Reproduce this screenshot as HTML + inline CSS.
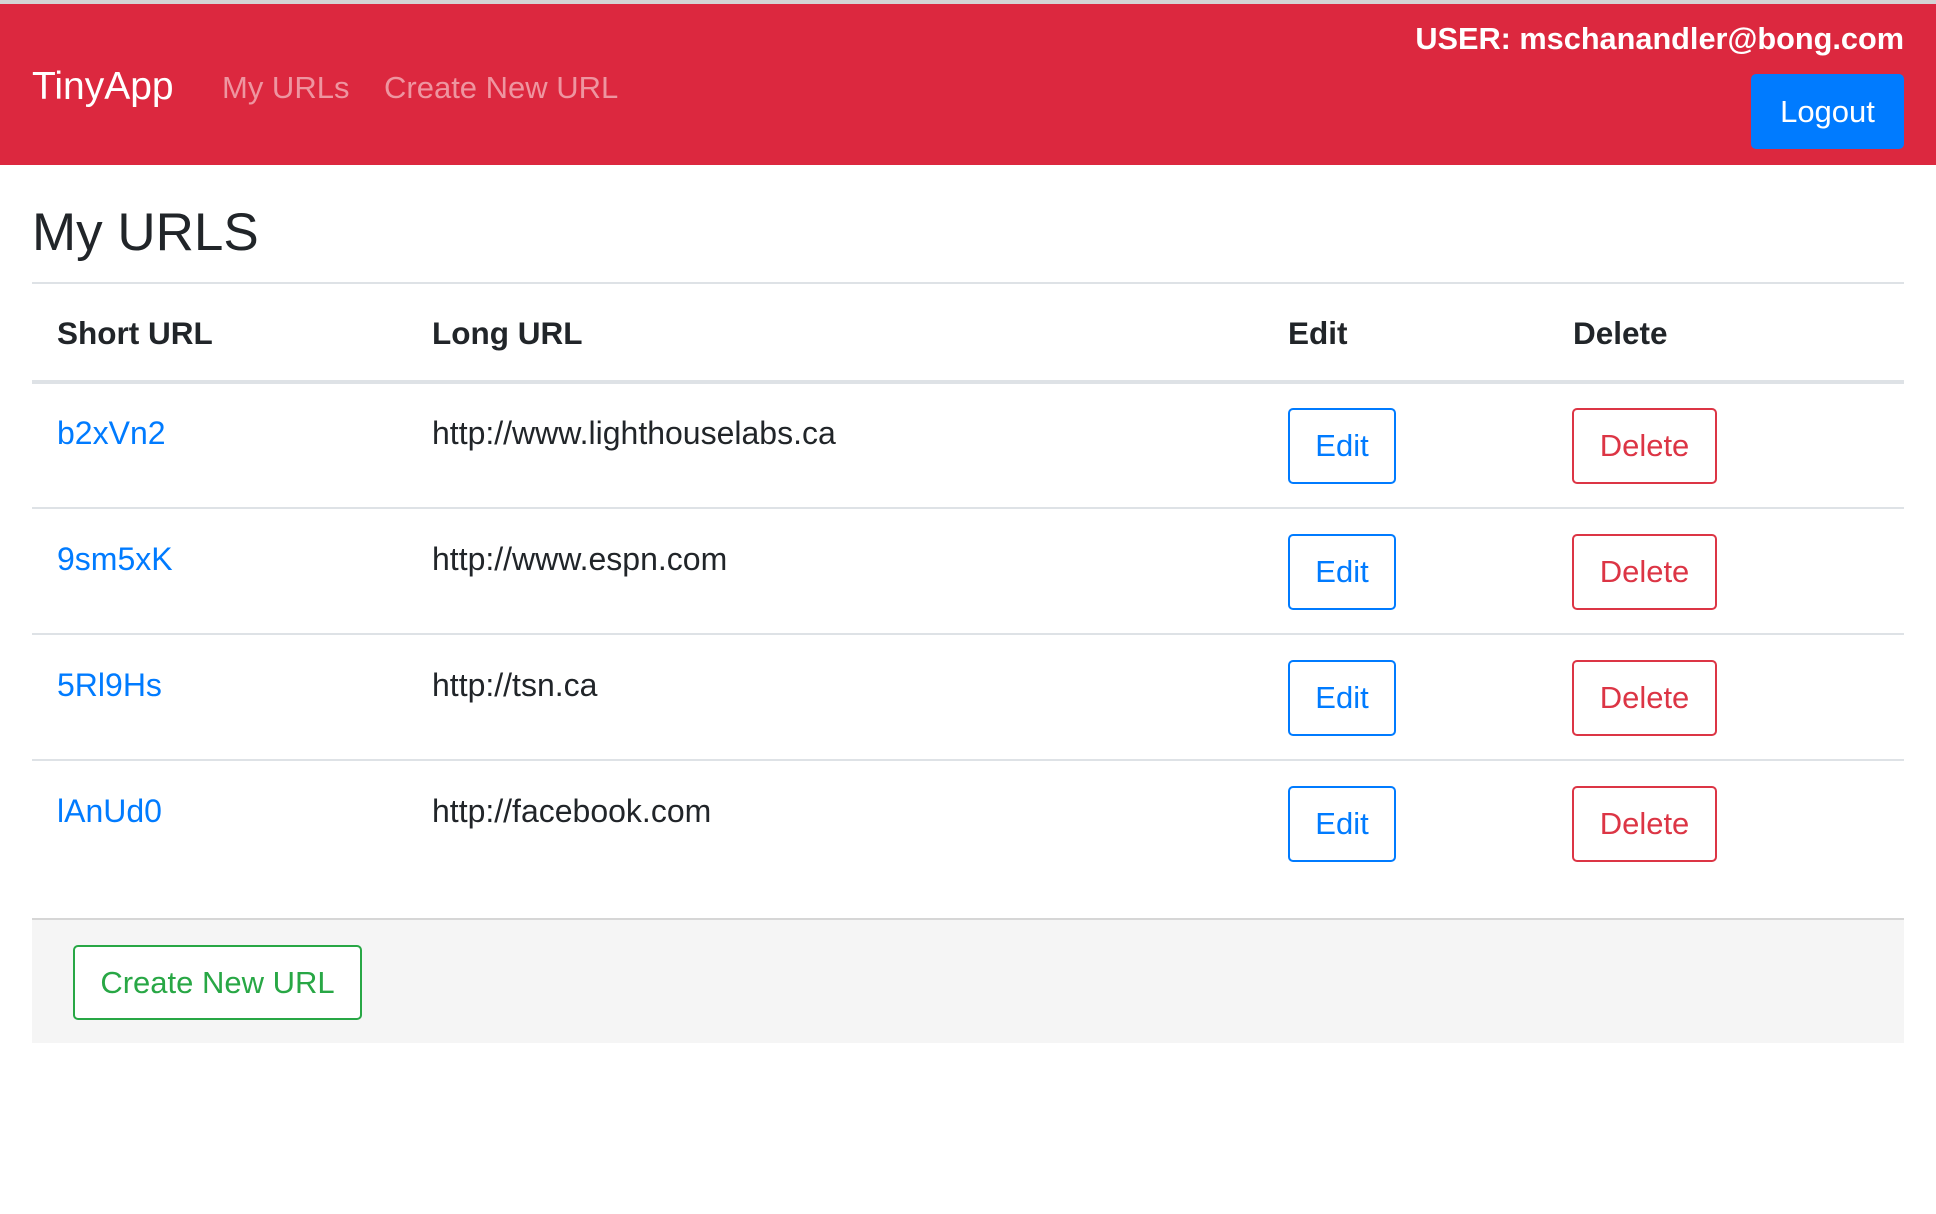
<!DOCTYPE html>
<html><head><meta charset="utf-8"><style>
*{margin:0;padding:0;box-sizing:border-box}
body{width:1936px;height:1214px;background:#fff;font-family:"Liberation Sans",Arial,sans-serif;color:#212529;position:relative;overflow:hidden}
.a{position:absolute;white-space:nowrap}
.top{left:0;top:0;width:1936px;height:4px;background:#d4d4d4}
.nav{left:0;top:4px;width:1936px;height:161px;background:#dc283f}
.btn{position:absolute;border-radius:5px;font-size:31px;display:flex;align-items:center;justify-content:center;background:#fff}
.line{position:absolute;left:32px;width:1872px;background:#dee2e6}
.cell{position:absolute;font-size:32px;line-height:36px}
.lnk{color:#007bff}
</style></head><body>
<div class="a top"></div>
<div class="a nav"></div>
<div class="a" style="left:32px;top:65px;font-size:39px;color:#fff;line-height:44px">TinyApp</div>
<div class="a" style="left:222px;top:70px;font-size:31px;color:#ee95a0;line-height:36px">My URLs</div>
<div class="a" style="left:384px;top:70px;font-size:31px;color:#ee95a0;line-height:36px">Create New URL</div>
<div class="a" style="right:32px;top:21px;font-size:30.7px;font-weight:bold;color:#fff;line-height:36px">USER: mschanandler@bong.com</div>
<div class="btn" style="left:1751px;top:74px;width:153px;height:75px;background:#007bff;color:#fff">Logout</div>
<div class="a" style="left:32px;top:201px;font-size:53px;font-weight:500;line-height:64px">My URLS</div>
<div class="line" style="top:282px;height:2px"></div>
<div class="cell" style="left:57px;top:315px;font-weight:bold;font-size:31.5px">Short URL</div>
<div class="cell" style="left:432px;top:315px;font-weight:bold;font-size:31.5px">Long URL</div>
<div class="cell" style="left:1288px;top:315px;font-weight:bold;font-size:31.5px">Edit</div>
<div class="cell" style="left:1573px;top:315px;font-weight:bold;font-size:31.5px">Delete</div>
<div class="line" style="top:380px;height:4px"></div>

<div class="cell lnk" style="left:57px;top:415px">b2xVn2</div>
<div class="cell" style="left:432px;top:415px">http://www.lighthouselabs.ca</div>
<div class="btn" style="left:1288px;top:408px;width:108px;height:76px;border:2px solid #007bff;color:#007bff">Edit</div>
<div class="btn" style="left:1572px;top:408px;width:145px;height:76px;border:2px solid #dc3545;color:#dc3545">Delete</div>
<div class="line" style="top:507px;height:2px"></div>

<div class="cell lnk" style="left:57px;top:541px">9sm5xK</div>
<div class="cell" style="left:432px;top:541px">http://www.espn.com</div>
<div class="btn" style="left:1288px;top:534px;width:108px;height:76px;border:2px solid #007bff;color:#007bff">Edit</div>
<div class="btn" style="left:1572px;top:534px;width:145px;height:76px;border:2px solid #dc3545;color:#dc3545">Delete</div>
<div class="line" style="top:633px;height:2px"></div>

<div class="cell lnk" style="left:57px;top:667px">5Rl9Hs</div>
<div class="cell" style="left:432px;top:667px">http://tsn.ca</div>
<div class="btn" style="left:1288px;top:660px;width:108px;height:76px;border:2px solid #007bff;color:#007bff">Edit</div>
<div class="btn" style="left:1572px;top:660px;width:145px;height:76px;border:2px solid #dc3545;color:#dc3545">Delete</div>
<div class="line" style="top:759px;height:2px"></div>

<div class="cell lnk" style="left:57px;top:793px">lAnUd0</div>
<div class="cell" style="left:432px;top:793px">http://facebook.com</div>
<div class="btn" style="left:1288px;top:786px;width:108px;height:76px;border:2px solid #007bff;color:#007bff">Edit</div>
<div class="btn" style="left:1572px;top:786px;width:145px;height:76px;border:2px solid #dc3545;color:#dc3545">Delete</div>

<div class="a" style="left:32px;top:918px;width:1872px;height:125px;background:#f5f5f5;border-top:2px solid #d6d6d6"></div>
<div class="btn" style="left:73px;top:945px;width:289px;height:75px;border:2px solid #28a745;color:#28a745">Create New URL</div>
</body></html>
